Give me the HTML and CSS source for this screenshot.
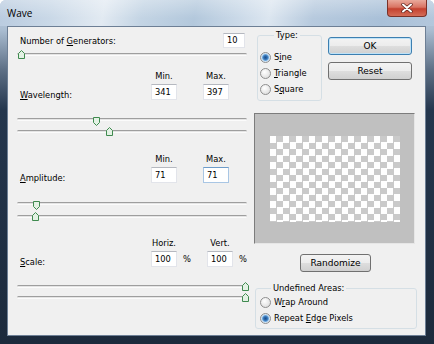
FILE: index.html
```html
<!DOCTYPE html>
<html>

<head>
  <link rel="stylesheet" href="styles.css">
</head>

<body>

  <div class="window">
    <div class="titlebar">
      <span class="title">Wave</span>
      <span class="close">
        <svg width="12" height="10" viewBox="0 0 12 10">
          <path d="M2 1.5 L10 8.5 M10 1.5 L2 8.5" stroke="#5a1f18" stroke-width="3.4" stroke-linecap="round" />
          <path d="M2 1.5 L10 8.5 M10 1.5 L2 8.5" stroke="#fff" stroke-width="2" stroke-linecap="round" />
        </svg>
      </span>
    </div>

    <div class="client">
      <div class="left">
        <div class="gen-row">
          <span class="label">Number of <u>G</u>enerators:</span>
          <span class="field small">10</span>
        </div>
        <div class="slider gen-slider">
          <div class="track"></div>
          <svg class="thumb up" style="left:4px" viewBox="0 0 7 9"><path d="M3.5 0.5 L6.5 3.5 V8.5 H0.5 V3.5 Z" /></svg>
        </div>

        <!-- wavelength -->
        <div class="fields heads sec-first">
          <span class="head c2">Min.</span>
          <span class="head c4">Max.</span>
        </div>
        <div class="fields row">
          <span class="label"><u>W</u>avelength:</span>
          <span class="field">341</span>
          <span></span>
          <span class="field">397</span>
        </div>
        <div class="pair">
          <div class="slider">
            <div class="track"></div>
            <svg class="thumb down" style="left:79px" viewBox="0 0 7 9"><path d="M0.5 0.5 H6.5 V5.5 L3.5 8.5 L0.5 5.5 Z" /></svg>
          </div>
          <div class="slider">
            <div class="track"></div>
            <svg class="thumb up" style="left:92px" viewBox="0 0 7 9"><path d="M3.5 0.5 L6.5 3.5 V8.5 H0.5 V3.5 Z" /></svg>
          </div>
        </div>

        <!-- amplitude -->
        <div class="fields heads">
          <span class="head c2">Min.</span>
          <span class="head c4">Max.</span>
        </div>
        <div class="fields row">
          <span class="label"><u>A</u>mplitude:</span>
          <span class="field">71</span>
          <span></span>
          <span class="field focus">71</span>
        </div>
        <div class="pair wide">
          <div class="slider">
            <div class="track"></div>
            <svg class="thumb down" style="left:19px" viewBox="0 0 7 9"><path d="M0.5 0.5 H6.5 V5.5 L3.5 8.5 L0.5 5.5 Z" /></svg>
          </div>
          <div class="slider">
            <div class="track"></div>
            <svg class="thumb up" style="left:18px" viewBox="0 0 7 9"><path d="M3.5 0.5 L6.5 3.5 V8.5 H0.5 V3.5 Z" /></svg>
          </div>
        </div>

        <!-- scale -->
        <div class="fields pct heads">
          <span class="head c2">Horiz.</span>
          <span class="head c4">Vert.</span>
        </div>
        <div class="fields pct row">
          <span class="label"><u>S</u>cale:</span>
          <span class="field">100</span>
          <span class="pct-sign">%</span>
          <span class="field">100</span>
          <span class="pct-sign">%</span>
        </div>
        <div class="pair tight">
          <div class="slider">
            <div class="track"></div>
            <svg class="thumb up" style="left:228px" viewBox="0 0 7 9"><path d="M3.5 0.5 L6.5 3.5 V8.5 H0.5 V3.5 Z" /></svg>
          </div>
          <div class="slider">
            <div class="track"></div>
            <svg class="thumb up" style="left:228px" viewBox="0 0 7 9"><path d="M3.5 0.5 L6.5 3.5 V8.5 H0.5 V3.5 Z" /></svg>
          </div>
        </div>
      </div>

      <div class="right">
        <div class="top">
          <fieldset class="group type">
            <legend>Type:</legend>
            <div class="radio-row"><span class="radio on"></span><span>S<u>i</u>ne</span></div>
            <div class="radio-row"><span class="radio"></span><span><u>T</u>riangle</span></div>
            <div class="radio-row"><span class="radio"></span><span>S<u>q</u>uare</span></div>
          </fieldset>
          <div class="buttons">
            <div class="btn default">OK</div>
            <div class="btn">Reset</div>
          </div>
        </div>

        <div class="preview">
          <div class="checker"></div>
        </div>

        <div class="btn randomize">Randomize</div>

        <fieldset class="group undefined">
          <legend>Undefined Areas:</legend>
          <div class="radio-row"><span class="radio"></span><span>W<u>r</u>ap Around</span></div>
          <div class="radio-row"><span class="radio on"></span><span>Repeat <u>E</u>dge Pixels</span></div>
        </fieldset>
      </div>
    </div>
  </div>

</body>

</html>
```

FILE: styles.css
```css
* {
  box-sizing: border-box;
}

body {
  margin: 0;
  background: #fff;
  font-family: "DejaVu Sans", sans-serif;
  font-size: 8.3px;
  color: #000;
}

u {
  text-underline-offset: 1px;
}

.window {
  width: 434px;
  height: 344px;
  display: flex;
  flex-direction: column;
  border-radius: 6px 6px 0 0;
  overflow: hidden;
  background: linear-gradient(#c3d4e6 0, #aabdd1 30px, #5d6f85 70px, #24364d 110px, #1c2a3c 100%);
}

.titlebar {
  height: 26px;
  flex: none;
  display: flex;
  justify-content: space-between;
  align-items: flex-start;
  padding: 0 7px 0 7px;
  background:
    linear-gradient(rgba(255, 255, 255, 0.3), rgba(255, 255, 255, 0) 70%),
    linear-gradient(100deg, #b9cbdf 0%, #c9d8e7 12%, #e2eaf2 24%, #c3d4e4 33%, #b3c8dc 45%, #cad9e8 55%, #dce6f0 62%, #b7cade 72%, #a9c0d8 88%, #b3c7dc 100%);
}

.title {
  font-family: "Open Sans", sans-serif;
  font-size: 10px;
  line-height: 26px;
}

.close {
  width: 40px;
  height: 17px;
  display: flex;
  align-items: center;
  justify-content: center;
  border: 1px solid #7a3128;
  border-top: none;
  border-radius: 0 0 4px 4px;
  background: linear-gradient(#e9a99b 0%, #d97463 45%, #c4412f 55%, #d46c57 100%);
}

.client {
  flex: 1;
  margin: 0 8px 8px 7px;
  background: #f0f0f0;
  border: 1px solid #6d7f95;
  display: grid;
  grid-template-columns: 230px 163px;
  column-gap: 7px;
  align-items: start;
  padding: 2px 8px 0 9px;
}

/* left column */

.left {
  padding-top: 3px;
}

.gen-row {
  display: flex;
  align-items: center;
  height: 16px;
  padding: 0 2px 0 3px;
}

.gen-row .label {
  flex: 1;
  padding-top: 1px;
}

.field {
  height: 16px;
  background: #fff;
  border: 1px solid #e2e4ea;
  border-top-color: #b5b8bf;
  padding: 0 3px;
  line-height: 14px;
  white-space: nowrap;
}

.field.small {
  width: 22px;
  height: 15px;
  line-height: 13px;
}

.field.focus {
  border-color: #a9c6e4;
  border-top-color: #6e9cc9;
}

.slider {
  position: relative;
  height: 11px;
  padding-top: 4px;
}

.track {
  height: 3px;
  border-radius: 2px;
  background: #e4e4e4;
  border-top: 1px solid #9e9e9e;
  border-bottom: 1px solid #fbfbfb;
}

.thumb {
  position: absolute;
  width: 7px;
  height: 9px;
  margin-left: -3.5px;
}

.thumb path {
  fill: #e3f1e4;
  stroke: #3f8a4f;
  stroke-width: 1;
}

.thumb.up {
  top: 1px;
}

.thumb.down {
  top: 3px;
}

.gen-slider {
  margin-top: 1px;
}

.fields {
  display: grid;
  grid-template-columns: 134px 26px 26px 26px 1fr;
}

.fields.pct {
  grid-template-columns: 134px 26px 30px 26px 1fr;
}

.heads {
  height: 12px;
  line-height: 12px;
  margin-top: 16px;
}

.heads.sec-first {
  margin-top: 10px;
}

.heads.pct {
  margin-top: 15px;
}

.head {
  text-align: center;
  white-space: nowrap;
}

.c2 {
  grid-column: 2;
}

.c4 {
  grid-column: 4;
}

.row {
  height: 16px;
  margin-top: 2px;
}

.row .label {
  padding: 5px 0 0 3px;
  line-height: 12px;
}

.pct-sign {
  padding-left: 6px;
  line-height: 16px;
}

.pair {
  display: flex;
  flex-direction: column;
  gap: 1px;
  margin-top: 14px;
}

.pair.wide {
  margin-top: 15px;
  gap: 2px;
}

.pair.tight {
  gap: 0;
}

/* right column */

.right {
  display: flex;
  flex-direction: column;
  align-items: flex-start;
}

.top {
  display: flex;
  align-items: flex-start;
}

.group {
  margin: 0;
  min-width: 0;
  border: 1px solid #d5dfe5;
  border-radius: 3px;
}

.group legend {
  padding: 0 2px;
  line-height: 12px;
}

.type {
  margin-left: 3px;
  width: 65px;
  padding: 8px 0 3px 2px;
}

.type legend {
  margin-left: 14px;
}

.radio-row {
  display: flex;
  align-items: center;
  gap: 3px;
  height: 16px;
  white-space: nowrap;
}

.radio {
  flex: none;
  width: 11px;
  height: 11px;
  border-radius: 50%;
  border: 1px solid #8f8f8f;
  background: radial-gradient(circle at 40% 35%, #ffffff, #d6d6d6);
}

.radio.on {
  background: radial-gradient(circle, #1c4f8c 0, #2f6db0 1.8px, #6aa6dc 3px, #cfe2f3 3.8px, #f2f2f2 100%);
}

.buttons {
  width: 84px;
  margin: 8px 0 0 6px;
  display: flex;
  flex-direction: column;
  gap: 7px;
}

.btn {
  height: 18px;
  border: 1px solid #707070;
  border-radius: 3px;
  background: linear-gradient(#f3f3f3 0, #ececec 50%, #dedede 50%, #d0d0d0 100%);
  text-align: center;
  line-height: 16px;
  font-size: 9px;
}

.btn.default {
  border-color: #3c7fb1;
  box-shadow: inset 0 0 0 1px #bfe2f7;
}

.preview {
  margin-top: 12px;
  width: 161px;
  height: 131px;
  background: #c0c0c0;
  border: 1px solid;
  border-color: #7c7c7c #e6e6e6 #e6e6e6 #7c7c7c;
  display: flex;
  align-items: center;
  justify-content: center;
}

.checker {
  width: 130px;
  height: 86px;
  background-color: #fff;
  background-image: conic-gradient(#cacaca 25%, #fff 0 50%, #cacaca 0 75%, #fff 0);
  background-size: 13px 13px;
}

.randomize {
  align-self: center;
  width: 71px;
  margin-top: 10px;
}

.undefined {
  width: 162px;
  margin: 10px 0 0 1px;
  padding: 0 0 2px 4px;
}

.undefined legend {
  margin-left: 11px;
}
```
